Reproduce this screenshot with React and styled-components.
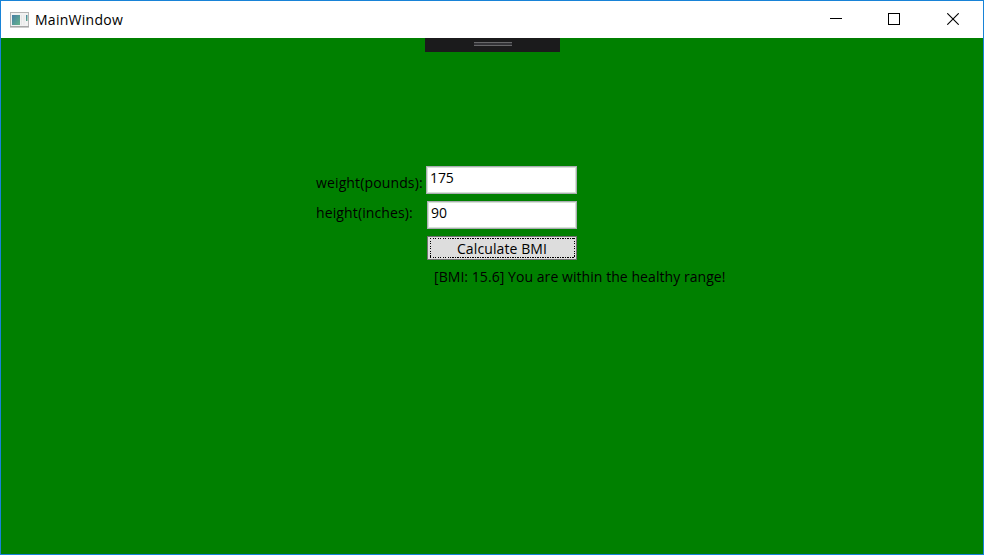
import React from "react";
import styled, { createGlobalStyle } from "styled-components";

const GlobalStyle = createGlobalStyle`
  * { box-sizing: border-box; }
  html, body { margin: 0; overflow: hidden; }
`;

const Window = styled.main`
  display: flex;
  flex-direction: column;
  width: 984px;
  height: 555px;
  border: 1px solid #1883d7;
  background: #008000;
  color: #000;
  font-family: "Open Sans", "Noto Sans", sans-serif;
  font-size: 14px;
  line-height: 20px;
`;

const TitleBar = styled.header`
  display: flex;
  align-items: center;
  flex: none;
  height: 37px;
  padding-left: 9px;
  background: #fff;
`;

const Label = styled.span`
  display: block;
  white-space: nowrap;
  letter-spacing: ${(p) => p.$spacing || "0"};
`;

const Title = styled(Label)`
  flex: 1;
  margin-left: 6px;
`;

const CaptionButton = styled.button`
  display: flex;
  align-items: center;
  justify-content: center;
  width: 58px;
  height: 37px;
  margin-right: ${(p) => p.$gap || "0"};
  padding: ${(p) => p.$pad || "0"};
  border: 0;
  background: none;
`;

const Client = styled.section`
  display: flex;
  flex-direction: column;
  align-items: flex-start;
`;

const DebugBar = styled.div`
  display: flex;
  justify-content: center;
  width: 135px;
  height: 14px;
  margin-left: 424px;
  padding-top: 4px;
  background: #1b1b1c;
`;

const Grip = styled.div`
  width: 38px;
  height: 4px;
  border: solid #68686a;
  border-width: 1px 0;
  background: #333337;
`;

const Form = styled.form`
  display: flex;
  flex-direction: column;
  margin: 114px 0 0 315px;
`;

const Row = styled.label`
  display: flex;
  align-items: flex-start;
  height: 35px;
`;

const Caption = styled(Label)`
  width: ${(p) => p.$width};
  padding-top: ${(p) => p.$top};
`;

const Input = styled.input`
  width: ${(p) => p.$width};
  height: 28px;
  padding: 0 3px 5px;
  border: 1px solid #abadb3;
  outline: 0;
  box-shadow: inset 0 0 0 1px #d5e3d5;
  border-radius: 0;
  background: #fff;
  color: #000;
  font: inherit;
  letter-spacing: -0.1px;
`;

const CalculateButton = styled.button`
  display: flex;
  width: 150px;
  height: 24px;
  margin-left: 111px;
  padding: 1px 1px 1px 2px;
  border: 1px solid #707070;
  background: #ddd;
  color: #000;
  font: inherit;
`;

const dotsX = "repeating-linear-gradient(90deg, #000 0 1.25px, transparent 1.25px 2.5px)";
const dotsY = "repeating-linear-gradient(180deg, #000 0 1.25px, transparent 1.25px 2.5px)";

const Focus = styled.span`
  display: flex;
  align-items: center;
  justify-content: center;
  flex: 1;
  padding: 2px 1px 0 0;
  background:
    ${dotsX} top / 100% 1px no-repeat,
    ${dotsX} bottom / 100% 1px no-repeat,
    ${dotsY} left / 1px 100% no-repeat,
    ${dotsY} right / 1px 100% no-repeat;
`;

const Result = styled(Label)`
  margin: 7px 0 0 118px;
`;

const AppIcon = () => (
  <svg width="19" height="16" viewBox="0 0 19 16">
    <defs>
      <linearGradient id="pane" x1="0" y1="0" x2="1" y2="1">
        <stop stopColor="#477ea6" />
        <stop offset="1" stopColor="#66b58b" />
      </linearGradient>
    </defs>
    <rect x=".5" y=".5" width="18" height="14" fill="#f2f2f2" stroke="#b5b5b5" />
    <path d="M0 15h19" stroke="#999" />
    <rect x="2" y="3" width="8" height="10" fill="url(#pane)" />
    <path d="M11.5 3v10M14 3v10" stroke="#e6e6e6" />
    <rect x="16" y="3" width="1.5" height="6" fill="url(#pane)" />
  </svg>
);

export default function App() {
  return (
    <>
      <GlobalStyle />
      <Window>
        <TitleBar>
          <AppIcon />
          <Title $spacing="0.27px">MainWindow</Title>
          <CaptionButton aria-label="Minimize" $pad="0 0 2px">
            <svg width="12" height="12"><path d="M0 5.5h12" stroke="#000" /></svg>
          </CaptionButton>
          <CaptionButton aria-label="Maximize" $gap="1px" $pad="0 0 1px">
            <svg width="12" height="12"><rect x=".5" y=".5" width="11" height="11" fill="none" stroke="#000" /></svg>
          </CaptionButton>
          <CaptionButton aria-label="Close" $gap="1px" $pad="0 0 1px">
            <svg width="12" height="12"><path d="M.3.3l11.4 11.4M11.7.3L.3 11.7" stroke="#000" strokeWidth="1.1" /></svg>
          </CaptionButton>
        </TitleBar>
        <Client>
          <DebugBar><Grip /></DebugBar>
          <Form onSubmit={(e) => e.preventDefault()}>
            <Row>
              <Caption $width="110px" $top="7px" $spacing="0.13px">weight(pounds):</Caption>
              <Input $width="151px" defaultValue="175" />
            </Row>
            <Row>
              <Caption $width="111px" $top="2px" $spacing="0.12px">height(inches):</Caption>
              <Input $width="150px" defaultValue="90" />
            </Row>
            <CalculateButton><Focus><Label $spacing="0.1px">Calculate BMI</Label></Focus></CalculateButton>
            <Result $spacing="0.06px">[BMI: 15.6] You are within the healthy range!</Result>
          </Form>
        </Client>
      </Window>
    </>
  );
}
